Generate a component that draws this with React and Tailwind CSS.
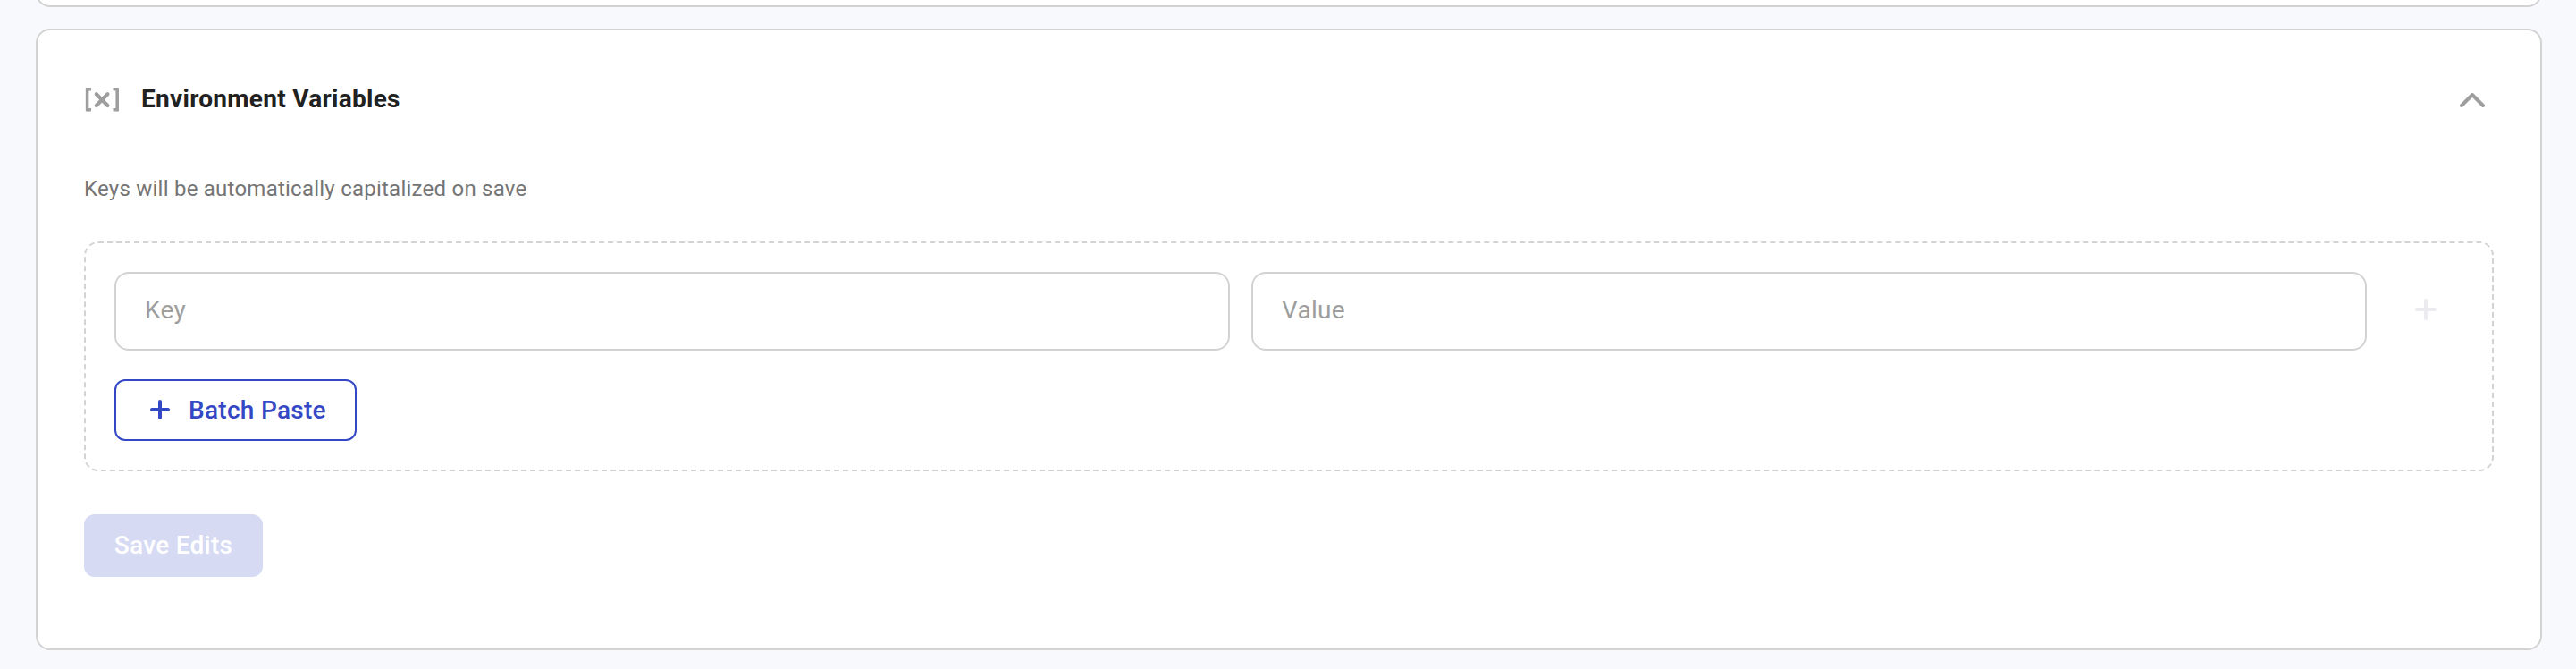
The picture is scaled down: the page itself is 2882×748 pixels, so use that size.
const Field = ({ label }) => (
  <input
    type="text"
    placeholder={label}
    className="h-[88px] w-[1248px] rounded-2xl border-2 border-[#d3d3d3] bg-white px-8 pb-1 text-[28px] tracking-[0.26px] text-[#212121] placeholder:text-[#9e9e9e] placeholder:opacity-100"
  />
);

export default function App() {
  return (
    <div className="h-[748px] overflow-hidden bg-[#f8f9fd] pl-10 pr-[38px] font-['Roboto',sans-serif]">
      <div className="h-2 overflow-hidden">
        <div className="-mt-8 h-10 rounded-2xl border-2 border-[#d3d3d3] bg-white" />
      </div>
      <section className="mt-6 h-[695px] rounded-2xl border-2 border-[#d3d3d3] bg-white px-[52px]">
        <header className="flex h-[156px] items-center">
          <svg className="h-7 w-10" viewBox="0 0 40 28" fill="none" stroke="#9e9e9e">
            <path d="M8 1.75H3.6V24.75H8M32.5 1.75H37.2V24.75H32.5" strokeWidth="3.5" />
            <path d="M13.8 7.3l12.6 12.6M26.4 7.3l-12.6 12.6" strokeWidth="4.2" strokeLinecap="round" />
          </svg>
          <h2 className="mb-0.5 ml-6 text-[28px] font-bold tracking-[0.28px] text-[#212121]">Environment Variables</h2>
          <svg className="ml-auto mr-2.5 h-4 w-7" viewBox="0 0 28 16" fill="none" stroke="#9e9e9e" strokeWidth="4" strokeLinecap="round" strokeLinejoin="round">
            <path d="M2 14L14 2l12 12" />
          </svg>
        </header>
        <p className="h-20 pt-px text-[24px] leading-10 tracking-[0.24px] text-[#757575]">
          Keys will be automatically capitalized on save
        </p>
        <div className="h-[257px] rounded-2xl border-2 border-dashed border-[#d3d3d3] p-8">
          <div className="flex items-center gap-6">
            <Field label="Key" />
            <Field label="Value" />
            <button className="mb-1 flex w-[84px] justify-center" aria-label="Add variable">
              <svg className="size-6" viewBox="0 0 24 24" stroke="#ebebf0" strokeWidth="4" strokeLinecap="round">
                <path d="M12 2v20M2 12h20" />
              </svg>
            </button>
          </div>
          <button className="mt-8 flex h-[69px] w-[271px] items-center rounded-xl border-2 border-[#3448c5] pl-[38px] text-[28px] font-medium tracking-[0.28px] whitespace-nowrap text-[#3448c5]">
            <svg className="mr-[21px] mb-px size-[22px]" viewBox="0 0 22 22" stroke="currentColor" strokeWidth="4" strokeLinecap="round">
              <path d="M11 2v18M2 11h18" />
            </svg>
            Batch Paste
          </button>
        </div>
        <button className="mt-12 flex h-[70px] w-[200px] items-center justify-center rounded-xl bg-[#d6daf3] text-[28px] font-medium tracking-[0.28px] whitespace-nowrap text-white">
          Save Edits
        </button>
      </section>
    </div>
  );
}
